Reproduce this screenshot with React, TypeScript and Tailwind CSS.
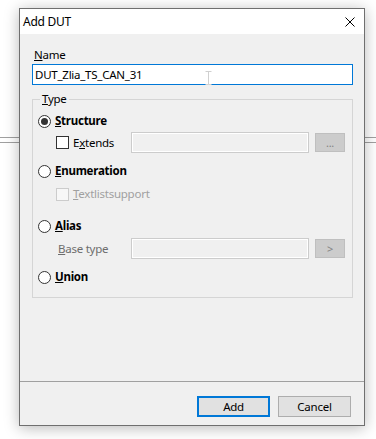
import React from 'react';

// Windows-style "Add DUT" dialog
const font = { fontFamily: '"Segoe UI", "Noto Sans", "Liberation Sans", sans-serif' };

const Radio: React.FC<{ checked?: boolean }> = ({ checked }) => (
  <span className="flex h-[13px] w-[13px] shrink-0 items-center justify-center rounded-full border border-[#333333] bg-white">
    {checked && <span className="h-[7px] w-[7px] rounded-full bg-[#333333]" />}
  </span>
);

const Check: React.FC<{ disabled?: boolean }> = ({ disabled }) => (
  <span
    className={
      disabled
        ? 'h-[13px] w-[13px] shrink-0 border border-[#cccccc] bg-[#f7f7f7]'
        : 'h-[13px] w-[13px] shrink-0 border border-[#333333] bg-white'
    }
  />
);

const DisabledInput: React.FC = () => (
  <div className="h-[21px] w-[178px] shrink-0 border border-[#cccccc] bg-[#f0f0f0] shadow-[inset_0_0_0_1px_#ffffff]" />
);

const SmallButton: React.FC<{ label: string }> = ({ label }) => (
  <div className="ml-[6px] flex h-[19px] w-[30px] shrink-0 items-center justify-center border border-[#bfbfbf] bg-[#cccccc] text-[11px] leading-none text-[#838383]">
    {label}
  </div>
);

const App: React.FC = () => {
  return (
    <div
      className="relative h-[439px] w-[376px] overflow-hidden bg-white text-[11.5px] tracking-[-0.25px] text-black"
      style={font}
    >
      {/* lines of the page behind the dialog */}
      <div className="absolute left-0 right-0 top-[137px] h-px bg-[#a0a0a0]" />
      <div className="absolute left-0 right-0 top-[142px] h-px bg-[#a0a0a0]" />

      <div className="relative z-10 ml-[19px] mt-[8px] flex h-[418px] w-[346px] flex-col border border-[#6f6f6f] bg-[#f0f0f0] shadow-[0_2px_14px_rgba(0,0,0,0.28)]">
        {/* title bar */}
        <div className="flex h-[25px] items-center justify-between bg-white pl-[3px] pr-[9px]">
          <span className="text-[12px] leading-none">Add DUT</span>
          <svg width="10" height="10" viewBox="0 0 10 10" className="mt-px">
            <path d="M0.5 0.5L9.5 9.5M9.5 0.5L0.5 9.5" stroke="#000" strokeWidth="1" />
          </svg>
        </div>

        {/* body */}
        <div className="flex flex-1 flex-col pl-[12px] pr-[11px] pt-[13px]">
          <div className="h-[16px] pl-[2px] leading-[16px]">
            <u>N</u>ame
          </div>
          <div className="relative mt-px flex h-[21px] w-[321px] items-center border border-[#0078d7] bg-white pl-[2px]">
            DUT_Zlia_TS_CAN_31
            <svg width="7" height="14" viewBox="0 0 7 14" className="absolute left-[172px] top-[6px]">
              <path d="M0.5 0.5H6.5M3.5 0.5V13.5M0.5 13.5H6.5" stroke="#d0d0d0" strokeWidth="1" fill="none" />
            </svg>
          </div>

          <fieldset className="mt-[6px] w-[321px] border border-[#d5d5d5] px-[4px] pb-[12px]">
            <legend className="ml-[3px] h-[16px] px-[2px] leading-[16px]">
              <u>T</u>ype
            </legend>

            <div className="mt-[6px] flex h-[16px] items-center gap-[4px] pl-px">
              <Radio checked />
              <span className="font-bold">
                <u>S</u>tructure
              </span>
            </div>

            <div className="mt-[3px] flex h-[21px] items-center pl-[19px]">
              <div className="flex w-[75px] shrink-0 items-center gap-[4px]">
                <Check />
                <span>
                  E<u>x</u>tends
                </span>
              </div>
              <DisabledInput />
              <SmallButton label="..." />
            </div>

            <div className="mt-[10px] flex h-[16px] items-center gap-[4px] pl-px">
              <Radio />
              <span className="font-bold">
                <u>E</u>numeration
              </span>
            </div>

            <div className="mt-[7px] flex h-[16px] items-center gap-[4px] pl-[19px] text-[#a0a0a0]">
              <Check disabled />
              <span>
                <u>T</u>extlistsupport
              </span>
            </div>

            <div className="mt-[16px] flex h-[16px] items-center gap-[4px] pl-px">
              <Radio />
              <span className="font-bold">
                <u>A</u>lias
              </span>
            </div>

            <div className="mt-[4px] flex h-[21px] items-center pl-[21px]">
              <span className="w-[73px] shrink-0 text-[#6d6d6d]">
                <u>B</u>ase type
              </span>
              <DisabledInput />
              <SmallButton label=">" />
            </div>

            <div className="mt-[10px] flex h-[16px] items-center gap-[4px] pl-px">
              <Radio />
              <span className="font-bold">
                <u>U</u>nion
              </span>
            </div>
          </fieldset>
        </div>

        {/* footer */}
        <div className="flex h-[44px] justify-end gap-[8px] border-t border-[#a0a0a0] pr-[13px] pt-[14px]">
          <button className="flex h-[21px] w-[73px] items-center justify-center border-2 border-[#0078d7] bg-[#e1e1e1]">
            Add
          </button>
          <button className="flex h-[21px] w-[73px] items-center justify-center border border-[#adadad] bg-[#e1e1e1]">
            Cancel
          </button>
        </div>
      </div>
    </div>
  );
};

export default App;
